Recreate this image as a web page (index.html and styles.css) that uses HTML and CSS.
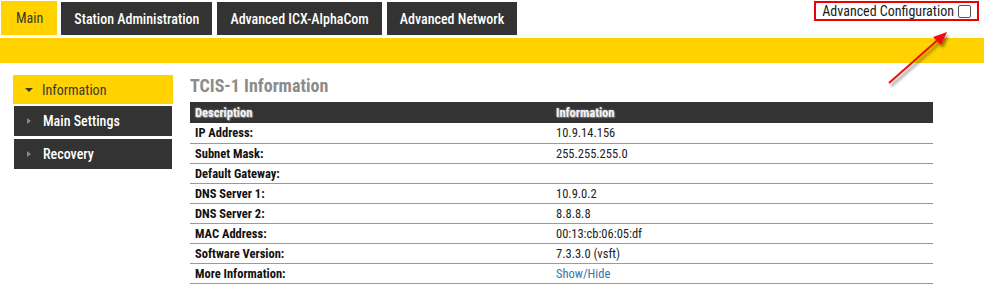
FILE: index.html
```html
<!DOCTYPE html>
<html>
<head>
<meta charset="utf-8">
<title>TCIS-1 Information</title>
<link rel="stylesheet" href="styles.css">
</head>
<body>
<header class="topbar">
  <nav class="tabs">
    <a class="tab tab-active">Main</a>
    <a class="tab">Station Administration</a>
    <a class="tab">Advanced ICX-AlphaCom</a>
    <a class="tab">Advanced Network</a>
  </nav>
  <label class="adv-config">Advanced Configuration <span class="checkbox"></span></label>
</header>
<div class="yellow-bar"></div>
<svg class="arrow" width="80" height="70" viewBox="0 0 80 70">
  <defs>
    <filter id="sh" x="-30%" y="-30%" width="160%" height="160%">
      <feDropShadow dx="2" dy="3" stdDeviation="1.6" flood-color="#000" flood-opacity="0.45"/>
    </filter>
  </defs>
  <g filter="url(#sh)">
    <line x1="9" y1="63" x2="60" y2="18" stroke="#ee1111" stroke-width="2"/>
    <polygon points="67,12 53,17 61,25" fill="#ee1111"/>
  </g>
</svg>
<div class="content">
  <aside class="sidebar">
    <div class="side-item side-active"><span class="tri-down"></span>Information</div>
    <div class="side-item"><span class="tri-right"></span>Main Settings</div>
    <div class="side-item"><span class="tri-right"></span>Recovery</div>
  </aside>
  <main class="main">
    <h1 class="title">TCIS-1 Information</h1>
    <table class="info">
      <thead>
        <tr><th class="c1">Description</th><th>Information</th></tr>
      </thead>
      <tbody>
        <tr><td class="lbl">IP Address:</td><td>10.9.14.156</td></tr>
        <tr><td class="lbl">Subnet Mask:</td><td>255.255.255.0</td></tr>
        <tr><td class="lbl">Default Gateway:</td><td></td></tr>
        <tr><td class="lbl">DNS Server 1:</td><td>10.9.0.2</td></tr>
        <tr><td class="lbl">DNS Server 2:</td><td>8.8.8.8</td></tr>
        <tr><td class="lbl">MAC Address:</td><td>00:13:cb:06:05:df</td></tr>
        <tr><td class="lbl">Software Version:</td><td>7.3.3.0 (vsft)</td></tr>
        <tr><td class="lbl">More Information:</td><td><a class="link">Show/Hide</a></td></tr>
      </tbody>
    </table>
  </main>
</div>
</body>
</html>
```
FILE: styles.css
```css
* { box-sizing: border-box; }
body {
  margin: 0;
  font-family: "Roboto Condensed", Roboto, sans-serif;
  color: #222;
  background: #fff;
  position: relative;
  width: 984px;
  height: 291px;
  overflow: hidden;
}
.topbar {
  display: flex;
  align-items: flex-start;
  height: 35px;
  margin-bottom: 3px;
}
.tabs {
  display: flex;
  align-items: flex-end;
  gap: 5px;
  height: 35px;
  padding-left: 1px;
}
.tab {
  display: flex;
  align-items: center;
  height: 33px;
  padding: 0 13px;
  background: #333333;
  color: #fff;
  font-size: 14px;
  font-weight: 500;
  white-space: nowrap;
  cursor: pointer;
}
.tab-active {
  height: 34px;
  background: #ffd200;
  color: #3a3a2a;
  font-weight: 400;
  padding: 0 14px 0 15px;
  margin-right: -1px;
}
.adv-config {
  margin-left: auto;
  margin-right: 5px;
  margin-top: 1px;
  height: 20px;
  border: 2px solid #ee0000;
  padding: 0 6px 0 6px;
  display: flex;
  align-items: center;
  gap: 4px;
  font-size: 14px;
  color: #1a1a1a;
  white-space: nowrap;
}
.checkbox {
  display: inline-block;
  width: 13px;
  height: 13px;
  border: 1px solid #555;
  border-radius: 2px;
  background: #fff;
}
.yellow-bar {
  height: 25px;
  background: #ffd200;
}
.arrow {
  position: absolute;
  left: 880px;
  top: 20px;
}
.content {
  display: flex;
  padding: 12px 0 0 13px;
}
.sidebar {
  width: 160px;
  display: flex;
  flex-direction: column;
}
.side-item {
  display: flex;
  align-items: center;
  height: 30px;
  width: 158px;
  margin: 0 0 3px 1px;
  background: #333333;
  color: #fff;
  font-size: 14px;
  font-weight: 500;
  padding-left: 13px;
}
.side-active {
  width: 160px;
  height: 29px;
  margin: 0 0 2px 0;
  background: #ffd200;
  color: #3a3a2a;
  font-weight: 400;
  padding-left: 12px;
}
.tri-down {
  width: 0; height: 0;
  border-left: 4px solid transparent;
  border-right: 4px solid transparent;
  border-top: 4px solid #3a3a2a;
  margin-right: 9px;
  margin-top: 1px;
}
.tri-right {
  width: 0; height: 0;
  border-top: 3.5px solid transparent;
  border-bottom: 3.5px solid transparent;
  border-left: 4px solid #888;
  margin-right: 12px;
}
.main {
  margin-left: 17px;
}
.title {
  margin: 0;
  height: 27px;
  font-size: 18px;
  font-weight: 700;
  color: #8c8c8c;
  line-height: 22px;
}
.info {
  width: 743px;
  border-collapse: collapse;
  font-size: 12.5px;
}
.info th {
  background: #333333;
  color: #f4f4f4;
  text-align: left;
  font-weight: 700;
  height: 21px;
  padding: 0 5px;
  text-shadow: 0 0 2px #aaa, 1px 1px 1px #777;
}
.info th.c1 { width: 361px; }
.info td {
  height: 20px;
  padding: 0 5px;
  border-bottom: 1px solid #9a9a9a;
  color: #222;
}
.info td.lbl { font-weight: 700; color: #111; }
.link { color: #3e72a8; cursor: pointer; }
```
